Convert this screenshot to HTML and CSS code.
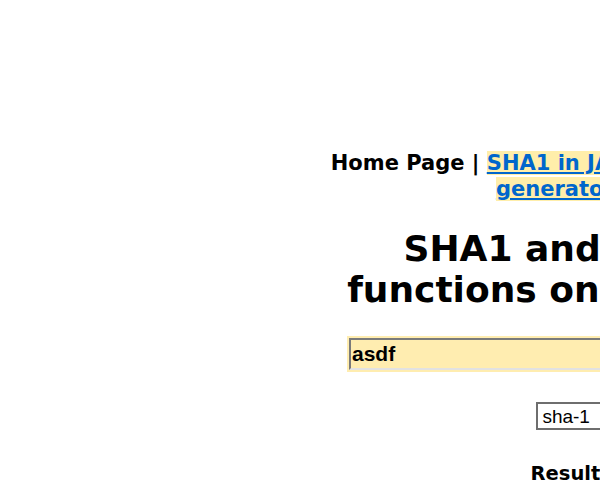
FILE: index.html
```html
<!DOCTYPE html>
<html>
<head>
<meta charset="utf-8">
<title>SHA1 and other hash functions online generator</title>
<link rel="stylesheet" href="styles.css">
</head>
<body>
<div class="page">
  <div class="nav">
    <span class="home">Home Page</span> | <a class="navlink" href="#">SHA1 in JAVA</a> | <a class="navlink" href="#">Secure password generator</a> | <a class="navlink" href="#">Linux</a>
  </div>
  <h1 class="title">SHA1 and other hash functions online generator</h1>
  <form class="form">
    <input class="text" type="text" value="asdf">
    <div class="row">
      <select class="algo"><option>sha-1</option><option>md5</option></select>
      <button class="btn" type="button">hash</button>
    </div>
  </form>
  <h2 class="result">Result for sha1:</h2>
</div>
</body>
</html>
```
FILE: styles.css
```css
html { overflow: hidden; }
body {
  margin: 0;
  background: #fff;
  font-family: "DejaVu Sans", Verdana, sans-serif;
  color: #000;
}
.page {
  width: 580px;
  margin-left: 328px;
  padding-top: 150px;
  text-align: center;
}
.nav {
  font-size: 21px;
  font-weight: bold;
  line-height: 26px;
  padding-right: 40px;
}
.nav a { color: #0066cc; text-decoration: underline; }
.navlink { background: #ffeeaa; }
.title {
  font-size: 36px;
  line-height: 41px;
  margin: 26px 0 0;
}
.form { margin-top: 28px; }
.text {
  display: block;
  box-sizing: border-box;
  width: 538px;
  height: 32px;
  margin: 0 auto;
  padding: 0 1px;
  background: #ffedb0;
  border-style: solid;
  border-width: 2px;
  border-color: #7a7a7a #d8d8d8 #e2e2e2 #7a7a7a;
  outline: 2px solid #ffedb0;
  font-family: "Liberation Sans", Arial, sans-serif;
  font-weight: bold;
  font-size: 21px;
}
.row {
  margin-top: 32px;
  display: flex;
  justify-content: center;
  gap: 6px;
}
.algo {
  font-family: "Liberation Sans", Arial, sans-serif;
  font-size: 19px;
  height: 28px;
  width: 100px;
  border: 2px solid #6e6e6e;
  background: #fff;
  border-radius: 0;
}
.btn {
  font-family: "Liberation Sans", Arial, sans-serif;
  font-size: 19px;
  height: 28px;
}
.result {
  font-size: 19.5px;
  margin: 32px 0 0;
}
```
